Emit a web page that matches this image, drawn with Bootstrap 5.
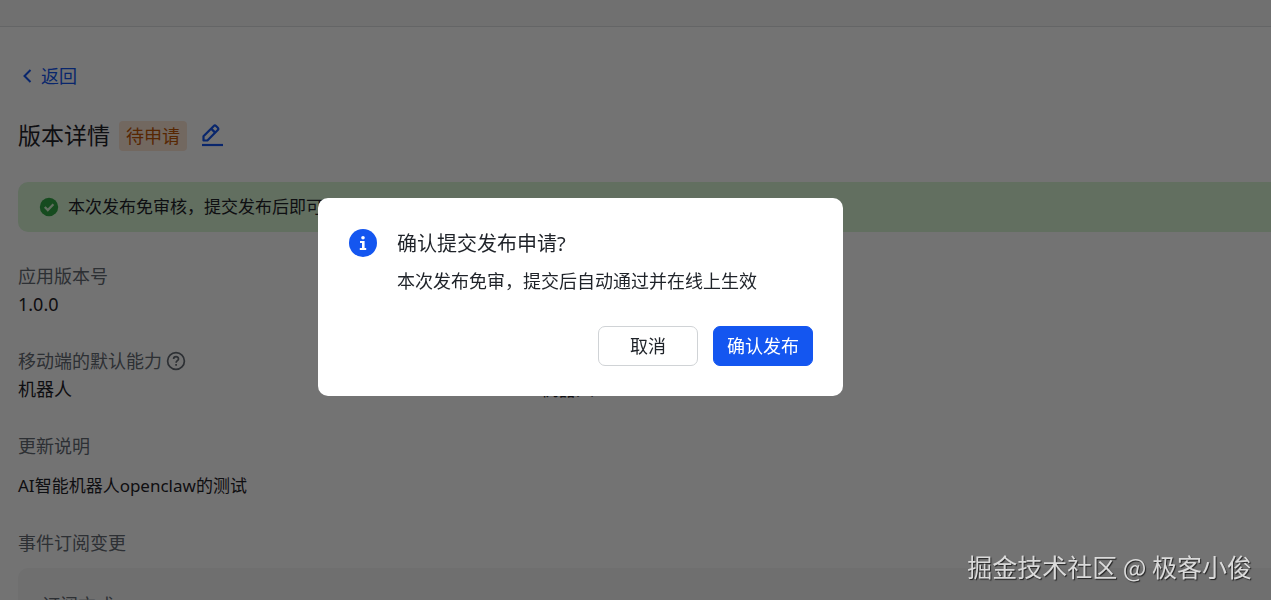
<!DOCTYPE html>
<html lang="zh-CN">
<head>
<meta charset="utf-8">
<meta name="viewport" content="width=device-width, initial-scale=1">
<title>版本详情</title>
<link rel="stylesheet" href="https://cdn.jsdelivr.net/npm/bootstrap@5.3.0/dist/css/bootstrap.min.css">
<style>
  :root { --brand: #1456f0; --ink: #1f2329; --muted: #646a73; }
  body { height: 100vh; font: 18px/28px "Noto Sans", "Noto Sans CJK SC", sans-serif; color: var(--ink); background: #fff; }
  .top-strip { height: 27px; background: #f8f8f8; border-bottom: 1px solid #dee0e3; }
  .page-body { padding: 35px 0 0 18px; }
  .back-link { color: var(--brand); gap: 8px; padding-left: 5px; }
  .page-title { font-size: 23px; line-height: 32px; }
  .title-row { margin-top: 29px; gap: 9px; }
  .status-tag { padding: 1px 7px; margin-top: 2px; border-radius: 4px; background: #fde6d6; color: #c25705; line-height: 28px; }
  .edit-btn { color: var(--brand); margin-left: 5px; line-height: 1; }
  .notice { margin-top: 31px; padding: 11px 21px; gap: 9px; background: #d9f5d6; border-radius: 10px 0 0 10px; }
  .body-text { font-size: 17px; }
  .field-label { color: var(--muted); }
  .fields { margin-top: 30px; }
  .fields dt, .fields dd { font-weight: 400; }
  .fields-next { margin-top: 29px; }
  .sub-panel { margin-top: 11px; padding: 23px 24px; background: #f5f6f7; border-radius: 10px 0 0 10px; color: var(--muted); }
  .modal-backdrop.show { opacity: .55; }
  .confirm-layer { padding-right: 110px; }
  .confirm-layer .modal-dialog { max-width: 525px; margin-top: 198px; }
  .confirm-box { border: 0; border-radius: 10px; padding: 31px 30px 30px; }
  .confirm-title { font-size: 20px; line-height: 30px; margin: 0; font-weight: 400; }
  .confirm-text { margin: 8px 0 0; line-height: 28px; }
  .confirm-main { gap: 20px; padding-left: 1px; }
  .confirm-actions { gap: 15px; margin-top: 31px; }
  .confirm-actions .btn { width: 100px; height: 40px; padding: 0; border-radius: 7px; font-size: 18px; }
  .btn-cancel { --bs-btn-color: var(--ink); --bs-btn-border-color: #d0d3d6; --bs-btn-bg: #fff; }
  .btn-brand { --bs-btn-color: #fff; --bs-btn-bg: var(--brand); --bs-btn-border-color: var(--brand); }
  .signature { z-index: 1080; right: 19px; bottom: 15px; font: 25px/38px "Noto Sans CJK SC", sans-serif; color: #dadada; text-shadow: 1px 1px 1px #222; }
</style>
</head>
<body class="overflow-hidden modal-open">
<header class="top-strip"></header>
<main class="page-body">
  <a href="#" class="back-link d-inline-flex align-items-center text-decoration-none">
    <svg width="10" height="14" viewBox="0 0 10 14" fill="none" stroke="currentColor" stroke-width="2" aria-hidden="true"><path d="M7.5 1 1.5 7l6 6"/></svg>返回</a>
  <div class="title-row d-flex align-items-center">
    <h1 class="page-title fw-normal mb-0">版本详情</h1>
    <span class="status-tag">待申请</span>
    <button class="edit-btn btn p-0 border-0" type="button" aria-label="编辑">
      <svg width="23" height="23" viewBox="0 0 23 23" fill="none" stroke="currentColor" stroke-width="2.2" stroke-linejoin="round" aria-hidden="true"><path d="M1 21h21"/><path d="M2.5 16.5v-4.2L12.8 2q1.1-1.1 2.2 0l1.8 1.8q1.1 1.1 0 2.2L6.4 16.5Z"/><path d="m10.4 4.9 3.5 3.5"/></svg>
    </button>
  </div>
  <div class="notice d-flex align-items-center">
    <svg width="20" height="20" viewBox="0 0 20 20" aria-hidden="true"><circle cx="10" cy="10" r="9.2" fill="#32a645"/><path d="m5.8 10 3 3 5.6-5.7" fill="none" stroke="#d9f5d6" stroke-width="2.3"/></svg>
    <span class="body-text">本次发布免审核，提交发布后即可上线</span>
  </div>
  <dl class="fields mb-0">
    <dt class="field-label">应用版本号</dt>
    <dd class="mb-0">1.0.0</dd>
  </dl>
  <div class="row gx-0 fields-next">
    <dl class="fields mt-0 mb-0 col-5">
      <dt class="field-label d-flex align-items-center gap-1">移动端的默认能力
        <svg width="20" height="20" viewBox="0 0 20 20" fill="none" stroke="currentColor" stroke-width="1.7" aria-hidden="true"><circle cx="10" cy="10" r="8.4"/><path d="M7.6 8.1c0-3.2 4.9-3.1 4.9-.2 0 1.7-2.4 1.8-2.4 3.8"/><path d="M10.1 13v1.8"/></svg>
      </dt>
      <dd class="mb-0">机器人</dd>
    </dl>
    <dl class="fields mt-0 mb-0 col-5">
      <dt class="field-label">&nbsp;</dt>
      <dd class="mb-0">机器人</dd>
    </dl>
  </div>
  <dl class="fields fields-next mb-0">
    <dt class="field-label">更新说明</dt>
    <dd class="body-text mb-0 mt-2 pt-1">AI智能机器人openclaw的测试</dd>
  </dl>
  <section class="fields-next">
    <div class="field-label">事件订阅变更</div>
    <div class="sub-panel">订阅方式</div>
  </section>
</main>

<div class="modal-backdrop show"></div>
<div class="modal show d-block confirm-layer" role="dialog" aria-modal="true" aria-labelledby="confirmTitle">
  <div class="modal-dialog">
    <div class="modal-content confirm-box">
      <div class="confirm-main d-flex align-items-start">
        <svg class="flex-shrink-0" width="28" height="28" viewBox="0 0 28 28" aria-hidden="true"><circle cx="14" cy="14" r="14" fill="#1456f0"/><circle cx="14" cy="8.7" r="1.8" fill="#fff"/><path d="M11 12h4.6v7H17.2v2H10.8v-2h2.2v-5h-2Z" fill="#fff"/></svg>
        <div>
          <h2 class="confirm-title" id="confirmTitle">确认提交发布申请?</h2>
          <p class="confirm-text">本次发布免审，提交后自动通过并在线上生效</p>
        </div>
      </div>
      <div class="confirm-actions d-flex justify-content-end">
        <button type="button" class="btn btn-cancel">取消</button>
        <button type="button" class="btn btn-brand">确认发布</button>
      </div>
    </div>
  </div>
</div>
<div class="signature position-fixed text-nowrap">掘金技术社区 @ 极客小俊</div>
<script src="https://cdn.jsdelivr.net/npm/bootstrap@5.3.0/dist/js/bootstrap.bundle.min.js"></script>
</body>
</html>
